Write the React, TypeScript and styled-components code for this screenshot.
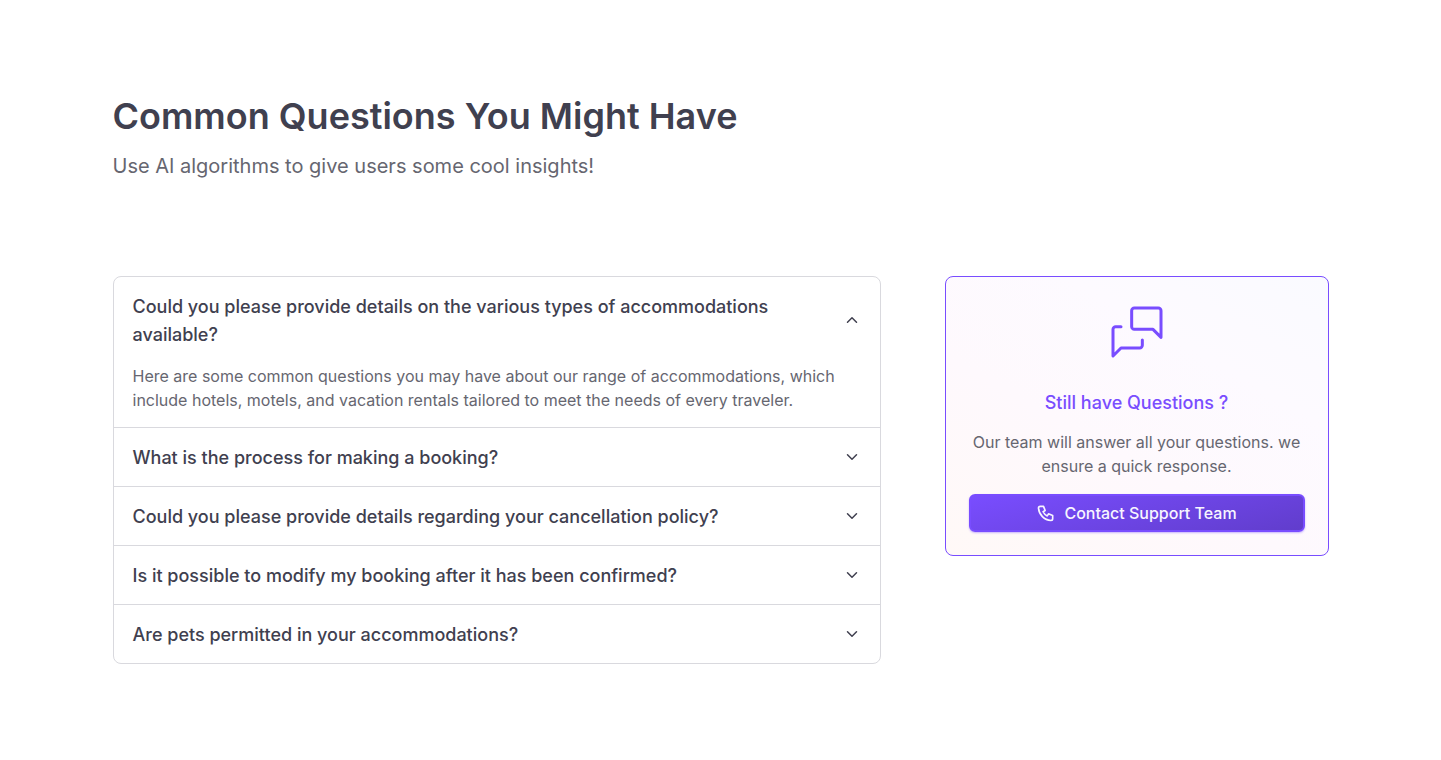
import React, { useState } from "react";
import styled, { createGlobalStyle } from "styled-components";
import { ChevronDown, ChevronUp } from "lucide-react";

const GlobalStyle = createGlobalStyle`
  *, *::before, *::after { box-sizing: border-box; }
  body {
    margin: 0;
    background: #fff;
    color: #40404f;
    font-family: Inter, "Liberation Sans", sans-serif;
    -webkit-font-smoothing: antialiased;
  }
  h1, h2, h3, p { margin: 0; }
  button { font: inherit; cursor: pointer; }
`;

const Section = styled.main`
  padding: 94px 32px 96px;
`;

const Container = styled.div`
  max-width: 1216px;
  margin: 0 auto;
`;

const Header = styled.header`
  display: flex;
  flex-direction: column;
  gap: 12px;
  margin-bottom: 95px;
`;

const Title = styled.h1`
  font-size: 36px;
  line-height: 45px;
  font-weight: 600;
`;

const Subtitle = styled.p`
  font-size: 20px;
  line-height: 30px;
  color: #666670;
`;

const Columns = styled.div`
  display: grid;
  grid-template-columns: 2fr 1fr;
  gap: 64px;
  align-items: start;

  @media (max-width: 900px) {
    grid-template-columns: 1fr;
  }
`;

const Accordion = styled.section`
  border: 1px solid #d9d9de;
  border-radius: 8px;
`;

const Item = styled.div`
  padding: 14px 19px;

  & + & {
    border-top: 1px solid #d9d9de;
  }
`;

const ItemHeading = styled.h2`
  margin: 0;
  font-size: 18px;
  line-height: 28px;
  font-weight: 500;
`;

const Question = styled.button`
  display: flex;
  align-items: center;
  justify-content: space-between;
  gap: 24px;
  width: 100%;
  padding: 0;
  border: 0;
  background: none;
  color: #40404f;
  text-align: left;

  svg { flex: none; }
`;

const QuestionText = styled.span`
  padding-top: 2px;
`;

const BodyText = styled.p`
  font-size: 16px;
  line-height: 24px;
  color: #666670;
`;

const Answer = styled(BodyText)`
  padding: 15px 0 1px;
`;

const Card = styled.aside`
  display: flex;
  flex-direction: column;
  align-items: center;
  padding: 23px;
  border: 1px solid #794dff;
  border-radius: 8px;
  background: linear-gradient(30deg, #fff9f7 0%, #fef9fd 40%, #fdfaff 70%, #fafaff 100%);
  text-align: center;
`;

const CardTitle = styled.h2`
  margin: 25px 0 13px;
  font-size: 18px;
  line-height: 28px;
  font-weight: 500;
  color: #794dff;
`;

const SupportButton = styled.button`
  display: flex;
  align-items: center;
  justify-content: center;
  gap: 8px;
  width: 100%;
  height: 38px;
  margin-top: 16px;
  padding: 0 16px;
  border: 2px solid #794dff;
  border-radius: 6px;
  background: linear-gradient(165deg, #794dff 0%, #613dcc 100%);
  box-shadow: 0 1px 2px rgba(121, 77, 255, 0.4);
  color: #f7f5ff;
  font-size: 16px;
  line-height: 24px;
  font-weight: 500;
`;

const ChatIcon = () => (
  <svg
    width="64"
    height="64"
    viewBox="0 0 24 24"
    fill="none"
    stroke="#794dff"
    strokeWidth="1.125"
    strokeLinecap="round"
    strokeLinejoin="round"
    aria-hidden="true"
  >
    <path d="M21 14l-3-3h-7a1 1 0 0 1-1-1V4a1 1 0 0 1 1-1h9a1 1 0 0 1 1 1v10" />
    <path d="M14 15v2a1 1 0 0 1-1 1H6l-3 3V11a1 1 0 0 1 1-1h2" />
  </svg>
);

const PhoneIcon = () => (
  <svg
    width="20"
    height="20"
    viewBox="0 0 24 24"
    fill="none"
    stroke="currentColor"
    strokeWidth="2"
    strokeLinecap="round"
    strokeLinejoin="round"
    aria-hidden="true"
  >
    <path d="M5 4h4l2 5l-2.500 1.500a11 11 0 0 0 5 5l1.500-2.500l5 2v4a2 2 0 0 1-2 2A16 16 0 0 1 3 6a2 2 0 0 1 2-2" />
  </svg>
);

const questions = [
  {
    question: "Could you please provide details on the various types of accommodations available?",
    answer:
      "Here are some common questions you may have about our range of accommodations, which include hotels, motels, and vacation rentals tailored to meet the needs of every traveler.",
  },
  {
    question: "What is the process for making a booking?",
    answer: "Choose a property, pick your dates and confirm your details at checkout.",
  },
  {
    question: "Could you please provide details regarding your cancellation policy?",
    answer: "Cancellation terms are listed on the page of each property.",
  },
  {
    question: "Is it possible to modify my booking after it has been confirmed?",
    answer: "Yes, contact our support team and we will update your booking.",
  },
  {
    question: "Are pets permitted in your accommodations?",
    answer: "Many of our properties welcome pets.",
  },
];

export default function App() {
  const [open, setOpen] = useState(0);

  return (
    <>
      <GlobalStyle />
      <Section>
        <Container>
          <Header>
            <Title>Common Questions You Might Have</Title>
            <Subtitle>Use AI algorithms to give users some cool insights!</Subtitle>
          </Header>
          <Columns>
            <Accordion>
              {questions.map(({ question, answer }, i) => {
                const Chevron = open === i ? ChevronUp : ChevronDown;
                return (
                  <Item key={question}>
                    <ItemHeading>
                      <Question
                        type="button"
                        aria-expanded={open === i}
                        onClick={() => setOpen(open === i ? -1 : i)}
                      >
                        <QuestionText>{question}</QuestionText>
                        <Chevron size={18} aria-hidden="true" />
                      </Question>
                    </ItemHeading>
                    {open === i && <Answer>{answer}</Answer>}
                  </Item>
                );
              })}
            </Accordion>
            <Card>
              <ChatIcon />
              <CardTitle>Still have Questions ?</CardTitle>
              <BodyText>Our team will answer all your questions. we ensure a quick response.</BodyText>
              <SupportButton type="button">
                <PhoneIcon />
                Contact Support Team
              </SupportButton>
            </Card>
          </Columns>
        </Container>
      </Section>
    </>
  );
}
